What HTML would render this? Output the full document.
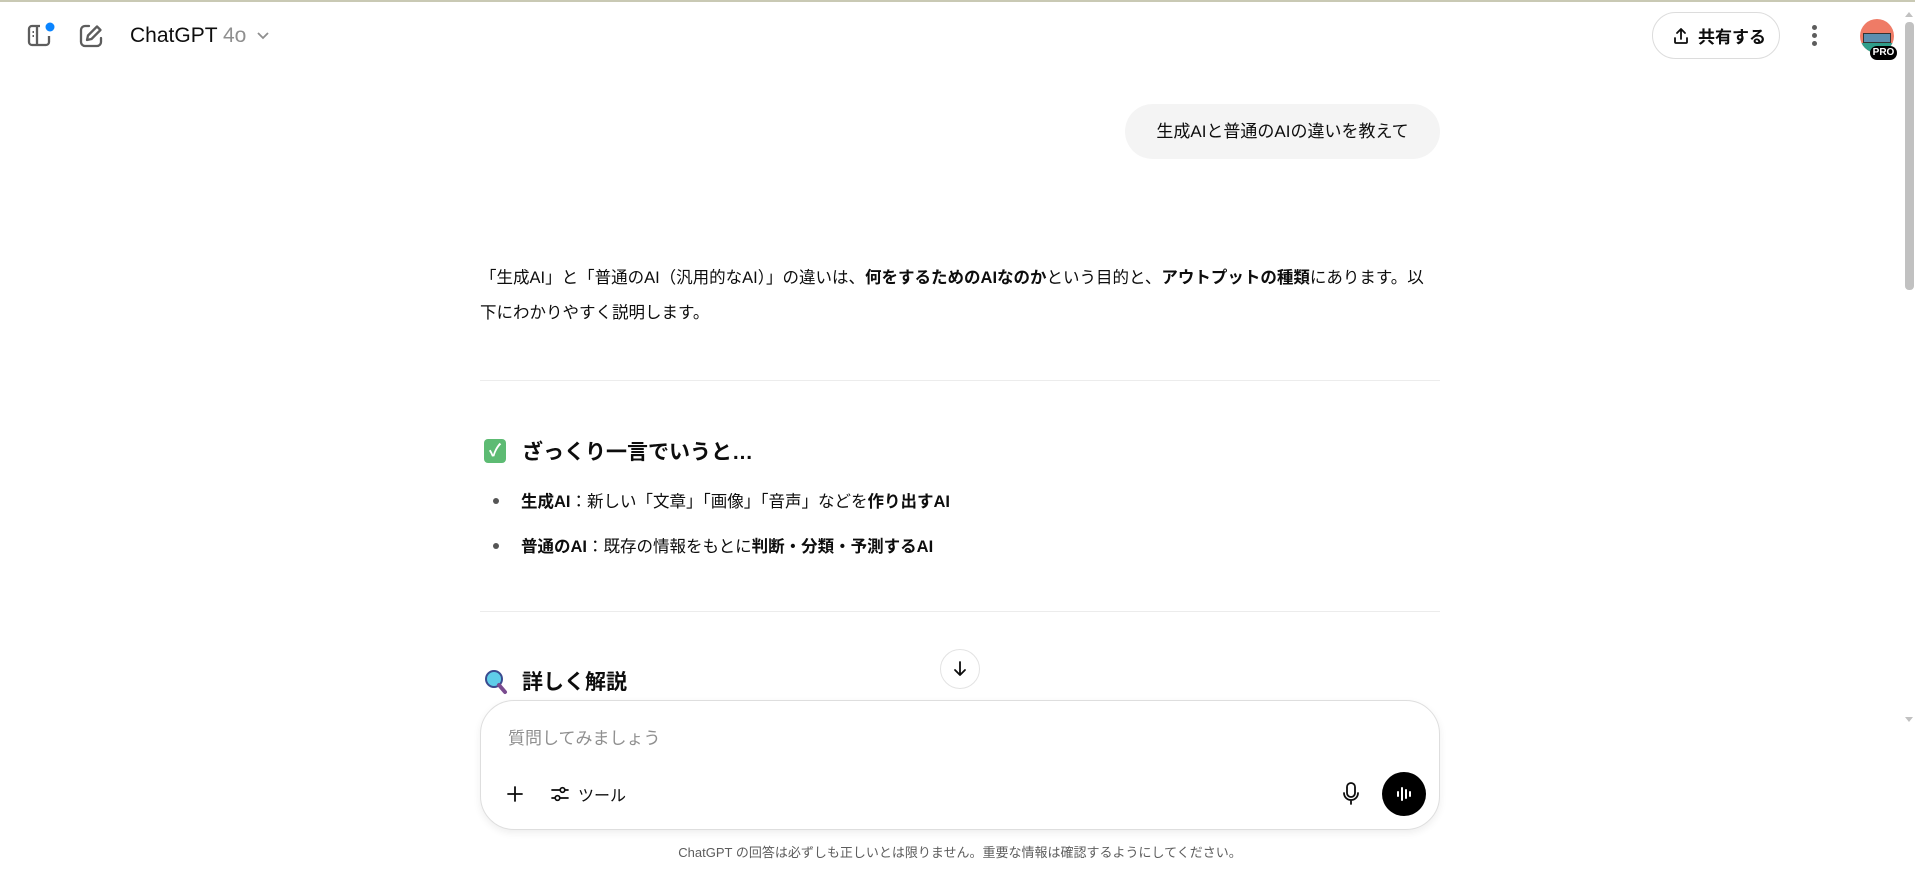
<!DOCTYPE html>
<html><head><meta charset="utf-8"><style>
*{box-sizing:border-box;margin:0;padding:0}
body{width:1915px;height:870px;overflow:hidden;background:#fff;font-family:"Liberation Sans","Noto Sans CJK JP",sans-serif;color:#0d0d0d;position:relative}
.abs{position:absolute}
.topline{left:0;top:0;width:1915px;height:2px;background:#c9c9b4}
.p{font-size:16.5px;line-height:35px;white-space:nowrap}
b{font-weight:700}
.hr{left:480px;width:960px;height:1px;background:#ececec}
.h{font-size:21px;font-weight:700;white-space:nowrap}
.li{font-size:16.5px;white-space:nowrap}
.dot{width:6px;height:6px;border-radius:50%;background:#555}
</style></head><body>
<div class="abs topline"></div>
<svg class="abs" style="left:26px;top:22px" width="30" height="28" viewBox="0 0 30 28"><path d="M14 4H6a3 3 0 0 0-3 3v13a3 3 0 0 0 3 3h14a3 3 0 0 0 3-3v-6" fill="none" stroke="#5d5d5d" stroke-width="2.3"/><line x1="11" y1="4" x2="11" y2="23" stroke="#5d5d5d" stroke-width="2.3"/><line x1="6.5" y1="10" x2="8" y2="10" stroke="#5d5d5d" stroke-width="2"/><line x1="6.5" y1="14" x2="8" y2="14" stroke="#5d5d5d" stroke-width="2"/><circle cx="24" cy="5" r="4.5" fill="#0a84ff"/></svg>
<svg class="abs" style="left:78px;top:23px" width="26" height="26" viewBox="0 0 26 26"><path d="M11 3H7a4 4 0 0 0-4 4v12a4 4 0 0 0 4 4h12a4 4 0 0 0 4-4v-4" fill="none" stroke="#5d5d5d" stroke-width="2.3" stroke-linecap="round"/><path d="M19 3.5l3.5 3.5-9 9-4.5 1 1-4.5z" fill="none" stroke="#5d5d5d" stroke-width="2.3" stroke-linejoin="round"/></svg>
<div class="abs" style="left:130px;top:24px;font-size:21px;white-space:nowrap">ChatGPT <span style="color:#8f8f8f">4o</span></div>
<svg class="abs" style="left:256px;top:31px" width="14" height="10" viewBox="0 0 14 10"><path d="M2 2l5 5 5-5" fill="none" stroke="#8f8f8f" stroke-width="1.8"/></svg>
<div class="abs" style="left:1652px;top:12px;width:128px;height:47px;border:1px solid #dcdcdc;border-radius:24px"></div>
<svg class="abs" style="left:1672px;top:26px" width="18" height="20" viewBox="0 0 18 20"><path d="M9 13V3M5 7l4-4 4 4M3 12v4a1 1 0 0 0 1 1h10a1 1 0 0 0 1-1v-4" fill="none" stroke="#0d0d0d" stroke-width="1.8" stroke-linecap="round" stroke-linejoin="round"/></svg>
<div class="abs" style="left:1698px;top:23px;font-size:17px;font-weight:700">共有する</div>
<div class="abs dot" style="left:1812px;top:25px;background:#5d5d5d;width:5px;height:5px"></div>
<div class="abs dot" style="left:1812px;top:33px;background:#5d5d5d;width:5px;height:5px"></div>
<div class="abs dot" style="left:1812px;top:41px;background:#5d5d5d;width:5px;height:5px"></div>
<div class="abs" style="left:1860px;top:19px;width:34px;height:34px;border-radius:50%;background:#ef7b66;overflow:hidden"><div style="position:absolute;left:3px;top:14px;width:28px;height:10px;background:#5b8fb0;border:1px solid #333"></div><div style="position:absolute;left:0;top:24px;width:34px;height:10px;background:#2f9e8a"></div></div>
<div class="abs" style="left:1870px;top:46px;width:27px;height:14px;border-radius:7px;background:#000;color:#fff;font-size:10px;font-weight:700;text-align:center;line-height:14px">PRO</div>
<div class="abs" style="left:1905px;top:22px;width:9px;height:268px;background:#c1c1c1;border-radius:4px"></div>
<svg class="abs" style="left:1904px;top:10px" width="10" height="8"><path d="M1 7l4-5 4 5z" fill="#c1c1c1"/></svg>
<svg class="abs" style="left:1904px;top:716px" width="10" height="8"><path d="M1 1l4 5 4-5z" fill="#c1c1c1"/></svg>
<div class="abs" style="left:1125px;top:104px;width:315px;height:55px;border-radius:28px;background:#f4f4f4;font-size:17px;line-height:55px;text-align:center;white-space:nowrap">生成AIと普通のAIの違いを教えて</div>
<div class="abs p" style="left:480px;top:261px">「生成AI」と「普通のAI（汎用的なAI）」の違いは、<b>何をするためのAIなのか</b>という目的と、<b>アウトプットの種類</b>にあります。以</div>
<div class="abs p" style="left:480px;top:296px">下にわかりやすく説明します。</div>
<div class="abs hr" style="top:380px"></div>
<div class="abs" style="left:484px;top:439px;width:22px;height:24px;border-radius:4px;background:#5dbb73;color:#fff;font-size:17px;text-align:center;line-height:24px;font-weight:700">✓</div>
<div class="abs h" style="left:522px;top:436px">ざっくり一言でいうと…</div>
<div class="abs dot" style="left:493px;top:498px"></div>
<div class="abs li" style="left:521px;top:488px"><b>生成AI</b>：新しい「文章」「画像」「音声」などを<b>作り出すAI</b></div>
<div class="abs dot" style="left:493px;top:543px"></div>
<div class="abs li" style="left:521px;top:533px"><b>普通のAI</b>：既存の情報をもとに<b>判断・分類・予測するAI</b></div>
<div class="abs hr" style="top:611px"></div>
<svg class="abs" style="left:484px;top:669px" width="24" height="26" viewBox="0 0 24 26"><circle cx="10" cy="10" r="8" fill="#5fcde8" stroke="#3a4b8f" stroke-width="2"/><path d="M15 16l6 7" stroke="#7a4b8f" stroke-width="4" stroke-linecap="round"/></svg>
<div class="abs h" style="left:522px;top:666px">詳しく解説</div>
<div class="abs" style="left:940px;top:649px;width:40px;height:40px;border-radius:50%;border:1px solid #e3e3e3;background:#fff"></div>
<svg class="abs" style="left:950px;top:659px" width="20" height="20" viewBox="0 0 20 20"><path d="M10 3v13M5 11l5 5 5-5" fill="none" stroke="#0d0d0d" stroke-width="1.8" stroke-linecap="round" stroke-linejoin="round"/></svg>
<div class="abs" style="left:480px;top:700px;width:960px;height:130px;border:1px solid #dedede;border-radius:34px;box-shadow:0 3px 8px rgba(0,0,0,.07);background:#fff"></div>
<div class="abs" style="left:508px;top:724px;font-size:17px;color:#8f8f8f">質問してみましょう</div>
<svg class="abs" style="left:505px;top:784px" width="20" height="20" viewBox="0 0 20 20"><path d="M10 3v14M3 10h14" stroke="#0d0d0d" stroke-width="1.8" stroke-linecap="round"/></svg>
<svg class="abs" style="left:550px;top:785px" width="20" height="18" viewBox="0 0 20 18"><path d="M2 5h8M15 5h3M2 13h3M10 13h8" stroke="#0d0d0d" stroke-width="1.7" stroke-linecap="round"/><circle cx="12.5" cy="5" r="2.3" fill="none" stroke="#0d0d0d" stroke-width="1.7"/><circle cx="7.5" cy="13" r="2.3" fill="none" stroke="#0d0d0d" stroke-width="1.7"/></svg>
<div class="abs" style="left:578px;top:782px;font-size:16px">ツール</div>
<svg class="abs" style="left:1341px;top:781px" width="20" height="26" viewBox="0 0 20 26"><rect x="6" y="2" width="8" height="14" rx="4" fill="none" stroke="#0d0d0d" stroke-width="1.8"/><path d="M3 12a7 7 0 0 0 14 0M10 19v4" fill="none" stroke="#0d0d0d" stroke-width="1.8" stroke-linecap="round"/></svg>
<div class="abs" style="left:1382px;top:772px;width:44px;height:44px;border-radius:50%;background:#000"></div>
<svg class="abs" style="left:1392px;top:782px" width="24" height="24" viewBox="0 0 24 24"><path d="M6 10v4M10 6v12M14 8v8M18 10v4" stroke="#fff" stroke-width="2" stroke-linecap="round"/></svg>
<div class="abs" style="left:0;width:1920px;top:842px;text-align:center;font-size:13px;color:#5d5d5d">ChatGPT の回答は必ずしも正しいとは限りません。重要な情報は確認するようにしてください。</div>
</body></html>
